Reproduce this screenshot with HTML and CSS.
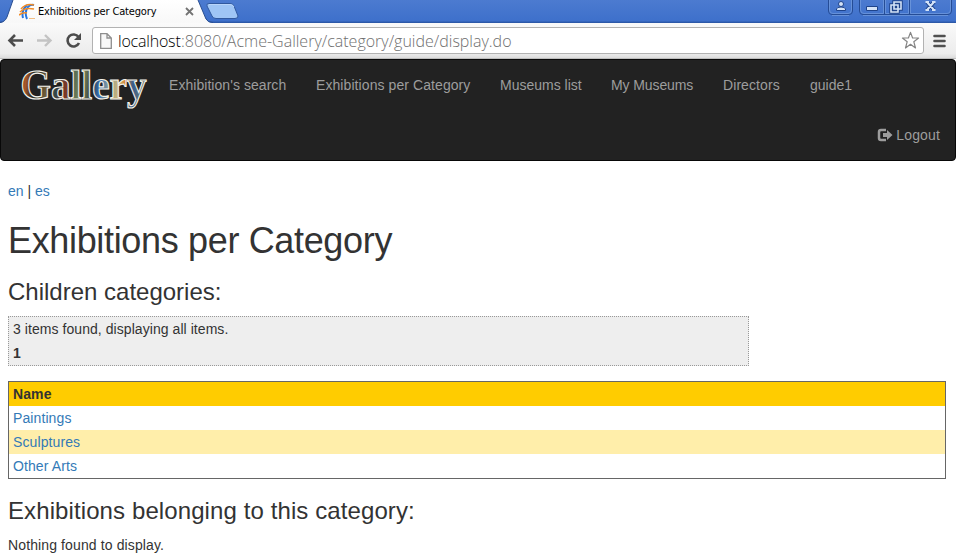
FILE: index.html
```
<!DOCTYPE html>
<html lang="en">
<head>
<meta charset="utf-8">
<title>Exhibitions per Category</title>
<link rel="stylesheet" href="styles.css">
</head>
<body>
<div class="browser">
  <div class="tabs">
    <svg class="tab-shape" width="242" height="23" viewBox="0 0 242 23">
      <defs><linearGradient id="tabfill" x2="0" y2="1"><stop offset="0" stop-color="#fff"/><stop offset="1" stop-color="#f8f8f8"/></linearGradient></defs>
      <path d="M0 23Q5 22 7 17L13 0H198L206 19Q208 23 213 23Z" fill="url(#tabfill)"/>
      <path d="M0 22.500Q5 22 7 17L13 0M198 0L206 19Q208 22.500 213 22.500" fill="none" stroke="#294e91"/>
      <path d="M209 3.500H230Q233 3.500 234 6L238 16Q238 18.500 235 18.500H216Q213 18.500 212 16L207 6Q206 3.500 209 3.500Z" fill="#9fc5f5" stroke="#31599f"/>
      <path d="M209 4.500H230Q233 4.500 234 7" fill="none" stroke="#b9d5fa"/>
    </svg>
    <div class="tab-content">
      <svg width="17" height="17" viewBox="0 0 17 17" fill="none">
        <path d="M4 15Q2 8 8 2M8 16Q5 9 9 4Q11 1 15 2" stroke="#2675df" stroke-width="2"/>
        <path d="M1 9Q6 4 15 6M2 6Q7 0 15 2M0 12Q4 9 8 10" stroke="#f28b25" stroke-width="1.600"/>
        <path d="M10 15.500h6" stroke="#f3bd82"/>
      </svg>
      <span class="tab-title">Exhibitions per Category</span>
      <svg class="tab-close" width="9" height="9" viewBox="0 0 9 9"><path d="M1 1L8 8M8 1L1 8" stroke="#737373" stroke-width="1.800"/></svg>
    </div>
    <svg class="window-controls" width="128" height="17" viewBox="0 0 128 17">
      <path d="M.5 0V11Q.5 14.500 4 14.500H21Q24.500 14.500 24.500 11V0M31.500 0V11Q31.500 14.500 35 14.500H120Q123.500 14.500 123.500 11V0M56.500 0V14M81.500 0V14" fill="none" stroke="#254c96"/>
      <path d="M1.500 0V10Q1.500 13.500 5 13.500H20Q23.500 13.500 23.500 10V0M32.500 0V10Q32.500 13.500 36 13.500H55.500V0M57.500 0V13.500H80.500V0M82.500 0V13.500H119Q122.500 13.500 122.500 10V0M4 15.500H21M35 15.500H120" fill="none" stroke="#78a0df" opacity=".65"/>
      <g stroke="#1e438a" fill="#d4e3f7">
        <circle cx="13" cy="4" r="2.500"/><path d="M8.500 10.500V9Q9 7 13 7T17.500 9V10.500ZM38.500 6.500H49.500V10.500H38.500Z"/>
      </g>
      <g fill="none"><path d="M66 2H73V9H66ZM63 5H70V12H63Z" stroke="#1e438a" stroke-width="3.500"/><path d="M66 2H73V9H66ZM63 5H70V12H63Z" stroke="#d4e3f7" stroke-width="1.600"/><path d="M99 2L106 10M106 2L99 10" stroke="#1e438a" stroke-width="4"/><path d="M99 2L106 10M106 2L99 10M97.500 2H101M104 2H107.500M97.500 10H101M104 10H107.500" stroke="#d4e3f7" stroke-width="2"/></g>
    </svg>
  </div>
  <div class="toolbar">
    <svg class="tools" width="92" height="34" viewBox="0 0 92 34" fill="none">
      <path d="M23 17.500H10M15 12L9.500 17.500L15 23" stroke="#4c4c4c" stroke-width="2.600"/>
      <path d="M37 17.500H50M45 12L50.500 17.500L45 23" stroke="#c3c3c3" stroke-width="2.400"/>
      <path d="M78.500 14A6 6 0 1 0 79 20" stroke="#4c4c4c" stroke-width="2.600"/><path d="M81 10V17H74Z" fill="#4c4c4c"/>
    </svg>
    <div class="address">
      <svg class="page-icon" width="12" height="16" viewBox="0 0 12 16"><path d="M.700 .700H7L11.300 5V15.300H.700ZM7 .700V5H11.300" fill="#f8f8f8" stroke="#8e8e8e" stroke-width="1.300"/></svg>
      <span class="host">localhost</span><span class="path">:8080/Acme-Gallery/category/guide/display.do</span>
      <svg class="star" width="19" height="19" viewBox="0 0 19 19"><path d="M9.500 1.400L11.600 7H17.600L12.800 10.700L14.500 17L9.500 13.300L4.500 17L6.200 10.700L1.400 7H7.400Z" fill="#fff" stroke="#858585" stroke-width="1.200" stroke-linejoin="round"/></svg>
    </div>
    <svg class="menu" width="13" height="14" viewBox="0 0 13 14"><path d="M1.500 2H11.500M1.500 7H11.500M1.500 12H11.500" stroke="#505050" stroke-width="2.600" stroke-linecap="round"/></svg>
  </div>
</div>
<nav class="navbar">
  <div class="nav-main">
    <svg class="logo" width="154" height="50" viewBox="0 0 154 50">
      <defs><linearGradient id="paint" gradientUnits="userSpaceOnUse" x1="20" y1="0" x2="147" y2="12"><stop offset="0" stop-color="#593219"/><stop offset=".06" stop-color="#a8572b"/><stop offset=".12" stop-color="#242923"/><stop offset=".23" stop-color="#74603a"/><stop offset=".3" stop-color="#2e4548"/><stop offset=".38" stop-color="#803624"/><stop offset=".42" stop-color="#456454"/><stop offset=".5" stop-color="#858b55"/><stop offset=".58" stop-color="#303e43"/><stop offset=".64" stop-color="#326eb5"/><stop offset=".71" stop-color="#8a9c96"/><stop offset=".79" stop-color="#c9b376"/><stop offset=".84" stop-color="#d7832c"/><stop offset=".9" stop-color="#355b8e"/><stop offset="1" stop-color="#77806b"/></linearGradient></defs>
      <text class="logo-text" x="20.500" y="39" textLength="126" lengthAdjust="spacingAndGlyphs" fill="url(#paint)">Gallery</text>
    </svg>
    <a class="search">Exhibition's search</a><a class="category">Exhibitions per Category</a><a class="museums">Museums list</a><a class="mine">My Museums</a><a class="directors">Directors</a><a>guide1</a>
  </div>
  <div class="nav-user">
    <svg width="16" height="14" viewBox="0 0 16 14"><path d="M9 2H4Q2 2 2 4V10Q2 12 4 12H9" fill="none" stroke="#9d9d9d" stroke-width="2.500"/><path d="M6 5H10V2L15.500 7L10 12V9H6Z" fill="#9d9d9d"/></svg>
    <a>Logout</a>
  </div>
</nav>
<main>
  <div class="languages"><a>en</a> | <a>es</a></div>
  <h1>Exhibitions per Category</h1>
  <h2>Children categories:</h2>
  <div class="pager"><div>3 items found, displaying all items.</div><strong>1</strong></div>
  <table>
    <thead><tr><th>Name</th></tr></thead>
    <tbody><tr><td><a>Paintings</a></td></tr><tr class="even"><td><a>Sculptures</a></td></tr><tr><td><a>Other Arts</a></td></tr></tbody>
  </table>
  <h2 class="exhibitions">Exhibitions belonging to this category:</h2>
  <p>Nothing found to display.</p>
</main>
</body>
</html>
```
FILE: styles.css
```
* { box-sizing: border-box; }
body { margin: 0; height: 555px; overflow: hidden; background: #fff; color: #333; font: 14px/20px "Liberation Sans", Arial, sans-serif; }
svg { display: block; flex-shrink: 0; }
.browser { height: 59px; }
.tabs { height: 23px; display: grid; grid-template-columns: 242px 1fr 128px; background: linear-gradient(#4c7bd0, #3e70cb 90%, #28529f); }
.tab-shape { grid-area: 1 / 1; }
.tab-content { grid-area: 1 / 1; display: flex; align-items: center; padding: 0 0 0 19px; height: 22px; }
.tab-title { width: 119px; margin-left: 2px; white-space: nowrap; font: 11px/16px "DejaVu Sans Condensed", "DejaVu Sans", sans-serif; font-stretch: condensed; letter-spacing: -.16px; padding-top: 1px; color: #000; }
.tab-close { margin-left: 28px; }
.window-controls { grid-area: 1 / 3; }
.toolbar { height: 36px; display: flex; background: linear-gradient(#fafafa, #ececec 85%, #dedede 96%, #aaa); }
.address { width: 832px; height: 27px; margin-top: 4px; display: flex; align-items: center; border: 1px solid #b2b2b2; border-radius: 3px; background: #fff; padding: 0 3px 0 7px; font: 300 16px/26px "Open Sans", sans-serif; white-space: nowrap; }
.page-icon { margin-right: 6px; }
.host { width: 63px; color: #000; letter-spacing: -.2px; }
.path { color: #6f6f6f; }
.star { margin-left: auto; }
.menu { margin: 11px 0 0 9px; }
.navbar { height: 102px; background: #222; border: 1px solid #080808; border-radius: 4px; color: #9d9d9d; }
.nav-main { height: 50px; display: flex; }
.logo { margin-left: -1px; }
.logo-text { font: bold 42px "Liberation Serif", serif; stroke: #f4f2eb; stroke-width: 1.15px; }
.nav-main a { padding: 15px; white-space: nowrap; }
.nav-main .search { width: 147px; letter-spacing: .05px; }
.nav-main .category { width: 184px; letter-spacing: .08px; }
.nav-main .museums { width: 111px; }
.nav-main .mine { width: 112px; letter-spacing: -.1px; }
.nav-main .directors { width: 87px; letter-spacing: .08px; }
.nav-user { height: 50px; display: flex; align-items: center; justify-content: flex-end; gap: 3px; padding-right: 15px; letter-spacing: .15px; }
main { padding: 20px 10px 0 8px; }
main a { color: #337ab7; }
h1, h2 { font-weight: 400; }
h1 { font-size: 36px; line-height: 40px; margin: 20px 0 10px; letter-spacing: -.34px; }
h2 { font-size: 24px; margin: 18px 0 11px; line-height: 26px; }
.pager { width: 741px; height: 50px; padding: 2px 4px; background: #eee; border: 1px dotted #999; letter-spacing: .06px; }
.pager strong { display: block; margin-top: 4px; }
table { width: 938px; margin: 15px 0 0; border: 1px solid #666; border-collapse: separate; border-spacing: 0; letter-spacing: .1px; }
th, td { height: 24px; padding: 2px 4px; text-align: left; }
th { background: #fc0; }
.even { background: #fea; }
.exhibitions { margin: 19px 0 11px; letter-spacing: .1px; }
p { margin: 0; letter-spacing: .12px; }
```
